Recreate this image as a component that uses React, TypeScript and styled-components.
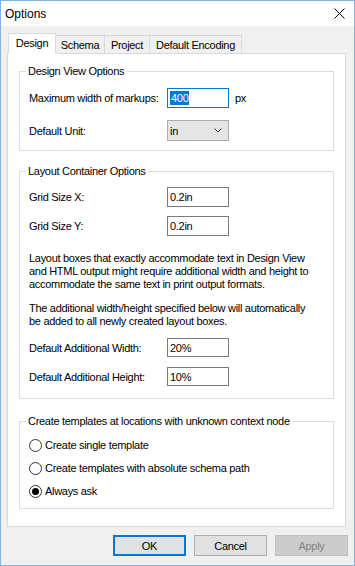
import React from "react";
import styled, { createGlobalStyle } from "styled-components";

const GlobalStyle = createGlobalStyle`
  html, body {
    margin: 0;
    padding: 0;
    background: #f0f0f0;
  }
  body {
    font-family: "Liberation Sans", Arial, sans-serif;
    font-size: 11px;
    letter-spacing: -0.3px;
    color: #000;
  }
`;

const Window = styled.div`
  width: 355px;
  height: 566px;
  box-sizing: border-box;
  border: 1px solid #7eb4ea;
  display: flex;
  flex-direction: column;
  background: #f0f0f0;
`;

const TitleBar = styled.div`
  height: 25px;
  flex: none;
  background: #fff;
  display: flex;
  align-items: center;
  justify-content: space-between;
  padding: 0 9px 0 4px;
  font-size: 12px;
  letter-spacing: 0;
`;

const Body = styled.div`
  flex: 1;
  display: flex;
  flex-direction: column;
  padding: 7px 8px 0 6px;
`;

const TabStrip = styled.div`
  display: flex;
  align-items: flex-end;
  height: 20px;
  padding-left: 1px;
`;

const Tab = styled.div<{ $w: number; $active?: boolean }>`
  width: ${(p) => p.$w}px;
  box-sizing: border-box;
  height: ${(p) => (p.$active ? 21 : 18)}px;
  margin-bottom: ${(p) => (p.$active ? -1 : 0)}px;
  margin-left: ${(p) => (p.$active ? 0 : -1)}px;
  position: relative;
  z-index: ${(p) => (p.$active ? 1 : 0)};
  background: ${(p) => (p.$active ? "#fff" : "#f0f0f0")};
  border: 1px solid #d9d9d9;
  border-bottom: none;
  display: flex;
  align-items: center;
  justify-content: center;
  padding-bottom: ${(p) => (p.$active ? 2 : 0)}px;
`;

const Panel = styled.div`
  height: 474px;
  box-sizing: border-box;
  background: #fff;
  border: 1px solid #d9d9d9;
  padding: 11px 11px 0 11px;
  display: flex;
  flex-direction: column;
`;

const Group = styled.fieldset<{ $top?: number }>`
  margin: ${(p) => p.$top ?? 0}px 0 0 0;
  border: 1px solid #dcdcdc;
  padding: 0 9px;
  min-width: 0;
`;

const Legend = styled.legend`
  padding: 0 2px;
  margin-left: -3px;
  line-height: 13px;
`;

const FormGrid = styled.div<{ $gap: number; $pt: number; $pb: number }>`
  display: grid;
  grid-template-columns: 138px 62px auto;
  row-gap: ${(p) => p.$gap}px;
  align-items: center;
  padding: ${(p) => p.$pt}px 0 ${(p) => p.$pb}px 0;
`;

const Label = styled.span``;

const TextBox = styled.div<{ $focused?: boolean; $h?: number }>`
  box-sizing: border-box;
  width: 62px;
  height: ${(p) => p.$h ?? 20}px;
  border: 1px solid ${(p) => (p.$focused ? "#0078d7" : "#7a7a7a")};
  background: #fff;
  display: flex;
  align-items: center;
  padding-left: 2px;
`;

const Selected = styled.span`
  background: #0078d7;
  color: #fff;
  line-height: 14px;
  padding: 0 1px;
`;

const Unit = styled.span`
  margin-left: 6px;
`;

const Select = styled.div`
  box-sizing: border-box;
  width: 62px;
  height: 21px;
  border: 1px solid #adadad;
  background: #e5e5e5;
  display: flex;
  align-items: center;
  justify-content: space-between;
  padding: 0 6px 0 2px;
`;

const Para = styled.p<{ $mt: number }>`
  margin: ${(p) => p.$mt}px 0 0 0;
  line-height: 13px;
  white-space: nowrap;
`;

const RadioList = styled.div`
  display: flex;
  flex-direction: column;
  gap: 10px;
  padding: 11px 0 10px 0;
`;

const RadioRow = styled.label`
  display: flex;
  align-items: center;
  gap: 3px;
  line-height: 13px;
`;

const RadioCircle = styled.span<{ $checked?: boolean }>`
  box-sizing: border-box;
  width: 13px;
  height: 13px;
  border-radius: 50%;
  border: 1px solid #333;
  background: #fff;
  display: flex;
  align-items: center;
  justify-content: center;
  &::after {
    content: "";
    display: ${(p) => (p.$checked ? "block" : "none")};
    width: 7px;
    height: 7px;
    border-radius: 50%;
    background: #000;
  }
`;

const ButtonRow = styled.div`
  display: flex;
  justify-content: flex-end;
  gap: 8px;
  margin: 8px -2px 0 0;
`;

const Button = styled.div<{ $variant?: "default" | "disabled" }>`
  box-sizing: border-box;
  width: 73px;
  height: 21px;
  display: flex;
  align-items: center;
  justify-content: center;
  background: ${(p) => (p.$variant === "disabled" ? "#cccccc" : "#e1e1e1")};
  color: ${(p) => (p.$variant === "disabled" ? "#838383" : "#000")};
  border: ${(p) =>
    p.$variant === "default"
      ? "2px solid #0078d7"
      : p.$variant === "disabled"
      ? "1px solid #bfbfbf"
      : "1px solid #adadad"};
`;

const CloseIcon = () => (
  <svg width="11" height="11" viewBox="0 0 11 11">
    <path d="M0.5 0.5 L10.5 10.5 M10.5 0.5 L0.5 10.5" stroke="#000" strokeWidth="1" />
  </svg>
);

const Chevron = () => (
  <svg width="8" height="5" viewBox="0 0 8 5">
    <path d="M0.5 0.5 L4 4 L7.5 0.5" stroke="#333" fill="none" strokeWidth="1" />
  </svg>
);

const App = () => {
  return (
    <>
      <GlobalStyle />
      <Window>
        <TitleBar>
          <span>Options</span>
          <CloseIcon />
        </TitleBar>
        <Body>
          <TabStrip>
            <Tab $w={48} $active>
              Design
            </Tab>
            <Tab $w={50}>Schema</Tab>
            <Tab $w={46}>Project</Tab>
            <Tab $w={93}>Default Encoding</Tab>
          </TabStrip>
          <Panel>
            <Group>
              <Legend>Design View Options</Legend>
              <FormGrid $gap={12} $pt={10} $pb={9}>
                <Label>Maximum width of markups:</Label>
                <TextBox $focused>
                  <Selected>400</Selected>
                </TextBox>
                <Unit>px</Unit>
                <Label>Default Unit:</Label>
                <Select>
                  <span>in</span>
                  <Chevron />
                </Select>
                <span />
              </FormGrid>
            </Group>

            <Group $top={14}>
              <Legend>Layout Container Options</Legend>
              <FormGrid $gap={9} $pt={9} $pb={0}>
                <Label>Grid Size X:</Label>
                <TextBox>0.2in</TextBox>
                <span />
                <Label>Grid Size Y:</Label>
                <TextBox>0.2in</TextBox>
                <span />
              </FormGrid>
              <Para $mt={16}>
                Layout boxes that exactly accommodate text in Design View
                <br />
                and HTML output might require additional width and height to
                <br />
                accommodate the same text in print output formats.
              </Para>
              <Para $mt={11}>
                The additional width/height specified below will automatically
                <br />
                be added to all newly created layout boxes.
              </Para>
              <FormGrid $gap={10} $pt={10} $pb={12}>
                <Label>Default Additional Width:</Label>
                <TextBox $h={19}>20%</TextBox>
                <span />
                <Label>Default Additional Height:</Label>
                <TextBox $h={19}>10%</TextBox>
                <span />
              </FormGrid>
            </Group>

            <Group $top={16}>
              <Legend>Create templates at locations with unknown context node</Legend>
              <RadioList>
                <RadioRow>
                  <RadioCircle />
                  Create single template
                </RadioRow>
                <RadioRow>
                  <RadioCircle />
                  Create templates with absolute schema path
                </RadioRow>
                <RadioRow>
                  <RadioCircle $checked />
                  Always ask
                </RadioRow>
              </RadioList>
            </Group>
          </Panel>
          <ButtonRow>
            <Button $variant="default">OK</Button>
            <Button>Cancel</Button>
            <Button $variant="disabled">Apply</Button>
          </ButtonRow>
        </Body>
      </Window>
    </>
  );
};

export default App;
